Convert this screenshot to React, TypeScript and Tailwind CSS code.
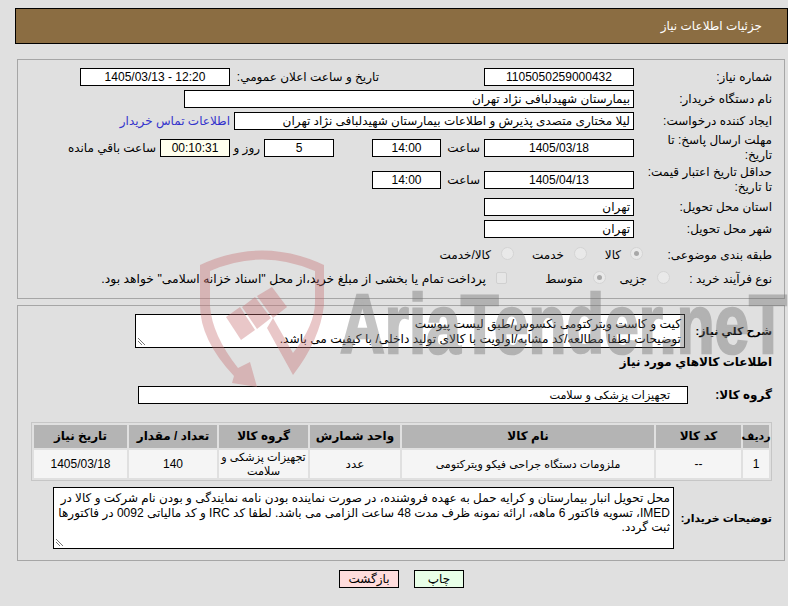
const box = 'h-[18px] border border-black bg-white flex items-center whitespace-nowrap shrink-0';
const label = 'shrink-0 leading-[15px] whitespace-nowrap';

const Radio = ({ on, className }: { on?: boolean; className: string }) => (
  <span className={`w-[13px] h-[13px] rounded-full border border-[#d4d4d4] bg-[#e9e9e9] flex items-center justify-center shrink-0 ${className}`}>
    {on && <span className="w-[5px] h-[5px] rounded-full bg-[#a8a8a8]" />}
  </span>
);

const Grip = () => (
  <svg className="absolute left-[1px] bottom-[1px]" width="9" height="9" viewBox="0 0 9 9">
    <path d="M1 1l7 7M1 4l4 4" stroke="#777" strokeWidth="1" fill="none" />
  </svg>
);

const headers = ['ردیف', 'کد کالا', 'نام کالا', 'واحد شمارش', 'گروه کالا', 'تعداد / مقدار', 'تاریخ نیاز'];

const Watermark = () => (
  <svg className="absolute inset-0 pointer-events-none" width="788" height="606" viewBox="0 0 788 606">
    <g fill="rgb(198,108,110)" fillOpacity="0.38">
      <path d="M200 265Q262 236 324 265L324 305Q320 340 293 375L267 328L273 318L293 353Q315 325 315 302L315 271Q262 248 210 271L210 306Q212 335 238 368L250 362L257 387L232 383L234 376Q200 340 200 305Z" />
      <path d="M226 317L240 307L255 330L241 340Z" />
      <path d="M242 307L255 297L271 318L257 329Z" />
      <path d="M257 296L272 287L287 307L273 318Z" />
    </g>
    <g opacity="0.4">
      <text x="340" y="353" fontFamily="'Liberation Sans', sans-serif" fontWeight="700" fontSize="84" fill="rgb(110,110,110)" stroke="rgb(110,110,110)" strokeWidth="2.5" textLength="447" lengthAdjust="spacingAndGlyphs" direction="ltr">AriaTender.neT</text>
    </g>
  </svg>
);

export default function App() {
  return (
    <div dir="rtl" className="relative w-[788px] h-[606px] overflow-hidden bg-[#e0e0e0] text-black text-[12px] leading-[15px] font-['Liberation_Sans','DejaVu_Sans',sans-serif]">
      <div className="ml-[15px] mt-[8px] h-[36px] border border-black bg-[#8b6d42] text-white flex items-center pr-[25px]">
        جزئیات اطلاعات نیاز
      </div>

      <div className="ml-[17px] mr-[3px] mt-[15px] h-[240px] border border-[#a6a6a6] pt-[8px] pr-[12px]">
        <div className="flex items-center h-[18px]">
          <div className={`${label} w-[138px]`}>شماره نیاز:</div>
          <div className={`${box} w-[150px] justify-center`}>1105050259000432</div>
          <div className={`${label} w-[149px] mr-[105px]`}>تاریخ و ساعت اعلان عمومي:</div>
          <div dir="ltr" className={`${box} w-[150px] justify-center`}>1405/03/13 - 12:20</div>
        </div>
        <div className="flex items-center h-[18px] mt-[4px]">
          <div className={`${label} w-[138px]`}>نام دستگاه خریدار:</div>
          <div className={`${box} w-[450px] pr-[3px]`}>بیمارستان شهیدلبافی نژاد تهران</div>
        </div>
        <div className="flex items-center h-[18px] mt-[4px]">
          <div className={`${label} w-[138px]`}>ایجاد کننده درخواست:</div>
          <div className={`${box} w-[400px] pr-[3px]`}>لیلا مختاری متصدی پذیرش و اطلاعات بیمارستان شهیدلبافی نژاد تهران</div>
          <div className="mr-[4px] text-[#3333cc] whitespace-nowrap">اطلاعات تماس خریدار</div>
        </div>
        <div className="flex items-center h-[18px] mt-[9px]">
          <div className={`${label} w-[138px]`}>مهلت ارسال پاسخ: تا<br />تاریخ:</div>
          <div className={`${box} w-[150px] justify-center`}>1405/03/18</div>
          <div className="w-[43px] shrink-0 pr-[4px]">ساعت</div>
          <div className={`${box} w-[69px] justify-center`}>14:00</div>
          <div className={`${box} w-[70px] justify-center mr-[38px]`}>5</div>
          <div className="w-[34px] shrink-0 pr-[4px]">روز و</div>
          <div className={`${box} w-[70px] justify-center !bg-[#ffffee]`}>00:10:31</div>
          <div className="mr-[4px] whitespace-nowrap">ساعت باقي مانده</div>
        </div>
        <div className="flex items-center h-[18px] mt-[14px]">
          <div className={`${label} w-[138px]`}>حداقل تاریخ اعتبار قیمت:<br />تا تاریخ:</div>
          <div className={`${box} w-[150px] justify-center`}>1405/04/13</div>
          <div className="w-[43px] shrink-0 pr-[4px]">ساعت</div>
          <div className={`${box} w-[69px] justify-center`}>14:00</div>
        </div>
        <div className="flex items-center h-[18px] mt-[9px]">
          <div className={`${label} w-[138px]`}>استان محل تحویل:</div>
          <div className={`${box} w-[150px] pr-[3px]`}>تهران</div>
        </div>
        <div className="flex items-center h-[18px] mt-[4px]">
          <div className={`${label} w-[138px]`}>شهر محل تحویل:</div>
          <div className={`${box} w-[150px] pr-[3px]`}>تهران</div>
        </div>
        <div className="flex items-center mt-[8px] h-[18px] whitespace-nowrap">
          <div className={`${label} w-[129px]`}>طبقه بندی موضوعی:</div>
          <Radio on className="mb-[3px]" />
          <div className="w-[16px] mr-[9px] shrink-0">کالا</div>
          <Radio className="mr-[18px] mb-[3px]" />
          <div className="w-[32px] mr-[10px] shrink-0">خدمت</div>
          <Radio className="mr-[18px] mb-[3px]" />
          <div className="mr-[10px]">کالا/خدمت</div>
        </div>
        <div className="flex items-center mt-[6px] h-[18px] whitespace-nowrap">
          <div className={`${label} w-[102px]`}>نوع فرآیند خرید :</div>
          <Radio className="mb-[3px]" />
          <div className="w-[27px] mr-[10px] shrink-0">جزیی</div>
          <Radio on className="mr-[14px] mb-[3px]" />
          <div className="w-[36px] mr-[10px] shrink-0">متوسط</div>
          <span className="w-[11px] h-[12px] mr-[40px] mb-[3px] rounded-[2px] border border-[#d0d0d0] bg-[#e6e6e6] shrink-0" />
          <div className="mr-[10px] text-[12.35px]">پرداخت تمام یا بخشی از مبلغ خرید،از محل "اسناد خزانه اسلامی" خواهد بود.</div>
        </div>
      </div>

      <div className="ml-[17px] mr-[3px] mt-[6px] h-[256px] border border-[#a6a6a6] pt-[8px] pr-[12px]">
        <div className="flex items-center">
          <div className={`${label} w-[87px] font-bold text-[11px]`}>شرح کلي نیاز:</div>
          <div className="relative w-[550px] h-[34px] border border-black bg-white pt-[2px] pr-[3px] whitespace-nowrap text-[12.2px]">
            <div>کیت و کاست ویترکتومی نکسوس/طبق لیست پیوست</div>
            <div>توضیحات لطفا مطالعه/کد مشابه/اولویت با کالای تولید داخلی/ با کیفیت می باشد.</div>
            <Grip />
          </div>
        </div>
        <div className="mt-[7px] font-bold">اطلاعات کالاهاي مورد نیاز</div>
        <div className="flex items-center mt-[16px]">
          <div className={`${label} w-[84px] font-bold`}>گروه کالا:</div>
          <div className={`${box} w-[550px] pr-[17px] text-[11.2px]`}>تجهیزات پزشکی و سلامت</div>
        </div>
        <div className="mt-[18px] w-[741px] h-[59px] border border-[#c6c6c6] p-[2px] grid grid-cols-[26px_85px_252px_90px_89px_88px_93px] grid-rows-[23px_28px] gap-[2px]">
          {headers.map((h, i) => (
            <div key={h} className={`bg-[#b4b4b4] font-bold flex items-center justify-center whitespace-nowrap ${i === 0 ? 'text-[11px]' : ''}`}>{h}</div>
          ))}
          <div className="bg-[#f5f5f5] flex items-center justify-center">1</div>
          <div className="bg-[#f5f5f5] flex items-center justify-center">--</div>
          <div className="bg-[#f5f5f5] flex items-center justify-center text-[11px]">ملزومات دستگاه جراحی فیکو ویترکتومی</div>
          <div className="bg-[#f5f5f5] flex items-center justify-center">عدد</div>
          <div className="bg-[#f5f5f5] flex items-center justify-center text-center text-[11.2px] leading-[14px] whitespace-nowrap">تجهیزات پزشکی و<br />سلامت</div>
          <div className="bg-[#f5f5f5] flex items-center justify-center">140</div>
          <div className="bg-[#f5f5f5] flex items-center justify-center">1405/03/18</div>
        </div>
        <div className="flex items-center mt-[6px]">
          <div className={`${label} w-[98px] font-bold text-[11px]`}>توضیحات خریدار:</div>
          <div className="relative w-[621px] h-[62px] border border-black bg-white pt-[3px] pr-[3px] whitespace-nowrap leading-[14.5px]">
            <div>محل تحویل انبار بیمارستان و کرایه حمل به عهده فروشنده، در صورت نماینده بودن نامه نمایندگی و بودن نام شرکت و کالا در</div>
            <div>IMED، تسویه فاکتور 6 ماهه، ارائه نمونه ظرف مدت 48 ساعت الزامی می باشد. لطفا کد IRC و کد مالیاتی 0092 در فاکتورها</div>
            <div>ثبت گردد.</div>
            <Grip />
          </div>
        </div>
      </div>

      <div className="flex mt-[9px] mr-[324px] gap-[15px]">
        <div className="w-[50px] h-[18px] border border-black bg-[#e8ffe8] flex items-center justify-center">چاپ</div>
        <div className="w-[60px] h-[18px] border border-black bg-[#ffdcdc] flex items-center justify-center">بازگشت</div>
      </div>

      <Watermark />
    </div>
  );
}
